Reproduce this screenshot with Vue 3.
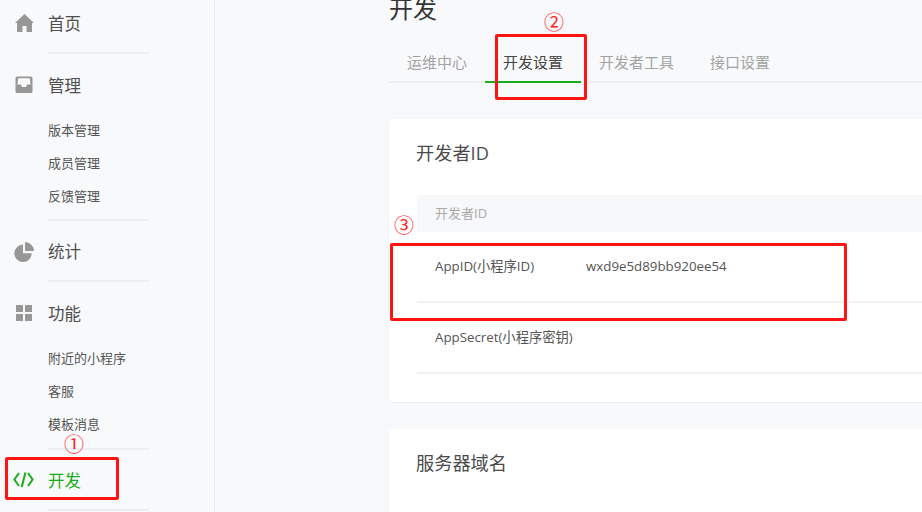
<script setup>
const groups = [
  { name: '首页', icon: 'home', subs: [] },
  { name: '管理', icon: 'inbox', subs: ['版本管理', '成员管理', '反馈管理'] },
  { name: '统计', icon: 'pie', subs: [] },
  { name: '功能', icon: 'grid', subs: ['附近的小程序', '客服', '模板消息'] },
  { name: '开发', icon: 'code', subs: [], active: true },
]
const tabs = [
  { name: '运维中心' },
  { name: '开发设置', active: true },
  { name: '开发者工具' },
  { name: '接口设置' },
]
const marks = [
  { id: 'm1', text: '①' },
  { id: 'm2', text: '②' },
  { id: 'm3', text: '③' },
]
</script>

<template>
  <div class="page">
    <aside class="side">
      <section v-for="g in groups" :key="g.name" class="group" :class="[g.icon, { active: g.active }]">
        <div class="head">
          <span class="ico">
            <svg v-if="g.icon === 'home'" width="21" height="20" viewBox="0 0 21 20"><path fill="#979797" d="M10.5 1 20 10H18V19H12.5V13H8.5V19H3V10H1Z" /></svg>
            <svg v-else-if="g.icon === 'inbox'" width="20" height="20" viewBox="0 0 20 20"><path fill="#979797" fill-rule="evenodd" d="M3 1.6H17A1.5 1.5 0 0 1 18.5 3.1V16.5A1.5 1.5 0 0 1 17 18H3A1.5 1.5 0 0 1 1.5 16.5V3.1A1.5 1.5 0 0 1 3 1.6ZM4.2 3.2 3.4 9.4H6.8L8 12H12L13.2 9.4H16.6L15.8 3.2Z" /></svg>
            <svg v-else-if="g.icon === 'pie'" width="21" height="22" viewBox="0 0 21 22"><path fill="#979797" d="M9 3.6V12.2H17.7A8.7 8.7 0 1 1 9 3.6ZM11 1A9 9 0 0 1 20 10H11Z" /></svg>
            <svg v-else-if="g.icon === 'grid'" width="20" height="20" viewBox="0 0 20 20"><path fill="#979797" d="M2 2H9V9H2ZM11 2H18V9H11ZM2 11H9V18H2ZM11 11H18V18H11Z" /></svg>
            <svg v-else width="23" height="20" viewBox="0 0 23 20"><path fill="none" stroke="#1aad19" stroke-width="2" d="M6 3 1.4 9.5 6 16M15 3 19.6 9.5 15 16M12.4 2.5 8.8 17" /></svg>
          </span>
          <span class="label">{{ g.name }}</span>
        </div>
        <ul v-if="g.subs.length" class="subs">
          <li v-for="s in g.subs" :key="s">{{ s }}</li>
        </ul>
      </section>
    </aside>

    <main class="main">
      <h1 class="title">开发</h1>
      <nav class="tabs">
        <a v-for="t in tabs" :key="t.name" class="tab" :class="{ on: t.active }">{{ t.name }}</a>
      </nav>

      <section class="card first">
        <h2 class="card-title">开发者ID</h2>
        <div class="table">
          <div class="thead">开发者ID</div>
          <div class="row">
            <span class="key">AppID(小程序ID)</span>
            <span class="val">wxd9e5d89bb920ee54</span>
          </div>
          <div class="row">
            <span class="key">AppSecret(小程序密钥)</span>
          </div>
        </div>
      </section>

      <section class="card">
        <h2 class="card-title">服务器域名</h2>
      </section>
    </main>

    <div class="box b1"></div>
    <div class="box b2"></div>
    <div class="box b3"></div>
    <span v-for="m in marks" :key="m.id" class="mark" :class="m.id">{{ m.text }}</span>
  </div>
</template>

<style scoped>
.page {
  position: relative;
  display: flex;
  width: 922px;
  height: 512px;
  overflow: hidden;
  background: #f8f9fb;
  font-family: "Open Sans", "Noto Sans CJK SC", sans-serif;
  color: #4d4d4d;
}
.side {
  box-sizing: border-box;
  width: 215px;
  height: 512px;
  flex: none;
  padding: 8px 65px 0 48px;
  border-right: 1px solid #e9ebef;
}
.group {
  border-bottom: 2px solid #eceef1;
  padding-bottom: 12px;
  margin-bottom: 15px;
}
.home {
  margin-bottom: 16px;
}
.inbox {
  padding-bottom: 6px;
}
.grid {
  padding-bottom: 7px;
}
.pie {
  margin-bottom: 16px;
}
.head {
  position: relative;
  display: flex;
  align-items: center;
  height: 32px;
}
.ico {
  position: absolute;
  left: -34px;
  top: 5px;
  display: flex;
}
.code .ico {
  left: -35px;
}
.label {
  font-size: 16.5px;
  line-height: 32px;
  color: #4f4f4f;
}
.active .label {
  color: #1aad19;
}
.subs {
  list-style: none;
  margin: 12px 0 0;
  padding: 0;
}
.subs li {
  height: 33px;
  line-height: 33px;
  font-size: 13px;
  color: #555;
}
.main {
  flex: 1;
  min-width: 0;
  padding-left: 174px;
  margin-right: -140px;
}
.title {
  margin: -9px 0 0;
  font-size: 24px;
  font-weight: 400;
  line-height: 36px;
  color: #353535;
}
.tabs {
  display: flex;
  box-sizing: border-box;
  height: 56px;
  border-bottom: 2px solid #eef0f3;
}
.tab {
  box-sizing: border-box;
  height: 56px;
  padding: 24px 18px 0;
  font-size: 15px;
  line-height: 22px;
  color: #a3a3a3;
}
.tab.on {
  color: #444;
  border-bottom: 2px solid #1aad19;
}
.card {
  box-sizing: border-box;
  padding-left: 27px;
  background: #fff;
  border-radius: 4px;
  box-shadow: 0 1px 2px rgba(0, 0, 0, .06);
  height: 283px;
  margin-top: 36px;
}
.first {
  margin-bottom: 27px;
}
.first + .card {
  margin-top: 0;
  height: 140px;
}
.card-title {
  margin: 0;
  padding-top: 21px;
  font-size: 18.2px;
  font-weight: 400;
  line-height: 26px;
  color: #4a4a4a;
}
.table {
  margin: 29px 0 0 1px;
}
.thead {
  height: 37px;
  padding-left: 18px;
  line-height: 37px;
  font-size: 13px;
  color: #a9a9a9;
  background: #f7f8fa;
}
.row {
  display: flex;
  box-sizing: border-box;
  height: 71px;
  padding: 23px 0 0 18px;
  border-bottom: 2px solid #f0f1f3;
  font-size: 13.3px;
  line-height: 22px;
  color: #555;
}
.key {
  width: 151px;
  flex: none;
}
.box {
  position: absolute;
  box-sizing: border-box;
  border: 3px solid #ff1414;
  border-radius: 2px;
}
.b1 { left: 5px; top: 457px; width: 114px; height: 43px; }
.b2 { left: 495px; top: 34px; width: 92px; height: 66px; }
.b3 { left: 390px; top: 243px; width: 457px; height: 78px; }
.mark {
  position: absolute;
  font-family: "Noto Sans CJK SC", sans-serif;
  font-size: 20px;
  line-height: 22px;
  color: #f22;
  width: 20px;
  text-align: center;
}
.m1 { left: 64px; top: 433px; }
.m2 { left: 544px; top: 11px; }
.m3 { left: 394px; top: 214px; }
</style>

<style>
html, body { margin: 0; overflow: hidden; background: #f8f9fb; }
</style>
